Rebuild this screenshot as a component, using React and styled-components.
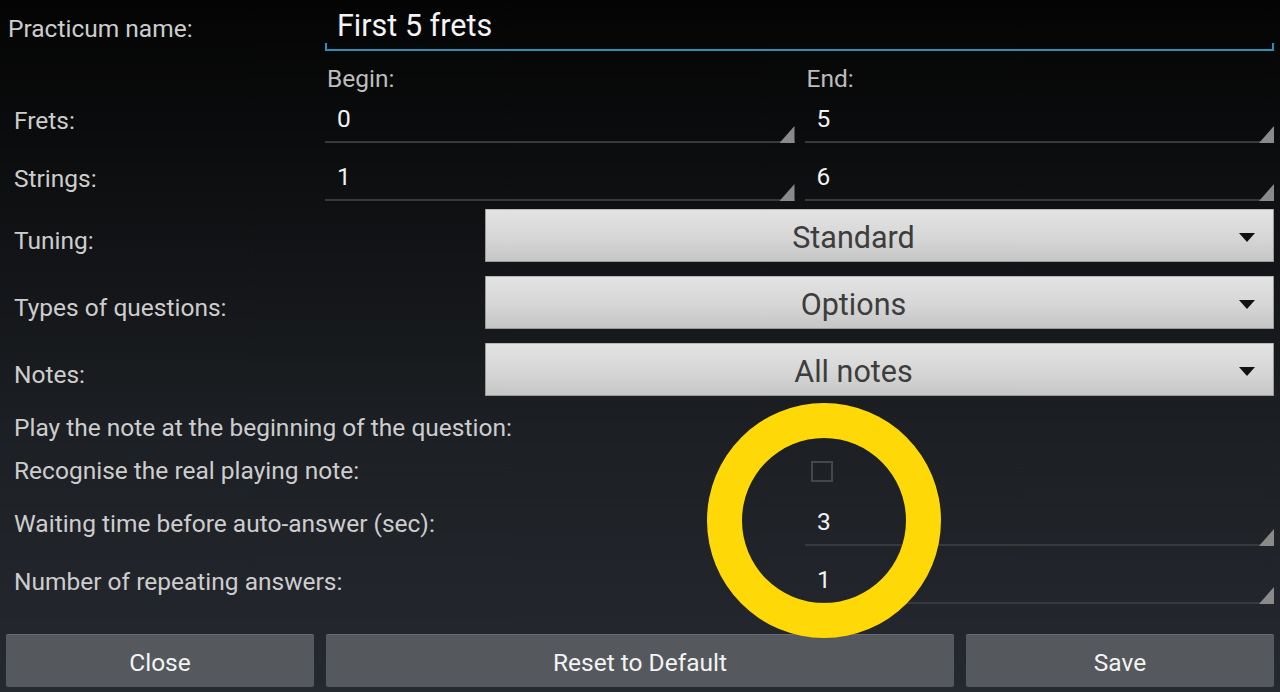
import styled, { createGlobalStyle } from 'styled-components'

const GlobalStyle = createGlobalStyle`
    html, body {
        margin: 0;
        padding: 0;
        background: #050505;
    }
    body {
        font-family: Roboto, "Noto Sans", "Liberation Sans", sans-serif;
    }
`

const Arrow = () => (
    <svg width="16" height="9" viewBox="0 0 16 9">
        <path d="M0 0 H16 L8 9 Z" fill="#111" />
    </svg>
)

const App = () => {
    return (
        <Screen>
            <GlobalStyle />
            <NameRow>
                <NameLabel>Practicum name:</NameLabel>
                <NameInput>First 5 frets</NameInput>
            </NameRow>

            <HeaderRow>
                <HeadCell>Begin:</HeadCell>
                <HeadCell>End:</HeadCell>
            </HeaderRow>

            <PairRow h={41}>
                <Label>Frets:</Label>
                <Field>0</Field>
                <Field>5</Field>
            </PairRow>
            <PairRow h={58}>
                <Label>Strings:</Label>
                <Field>1</Field>
                <Field>6</Field>
            </PairRow>

            <SpinnerRow top={8}>
                <SpinLabel>Tuning:</SpinLabel>
                <Spinner>
                    <span>Standard</span>
                    <ArrowBox><Arrow /></ArrowBox>
                </Spinner>
            </SpinnerRow>
            <SpinnerRow top={14}>
                <SpinLabel>Types of questions:</SpinLabel>
                <Spinner>
                    <span>Options</span>
                    <ArrowBox><Arrow /></ArrowBox>
                </Spinner>
            </SpinnerRow>
            <SpinnerRow top={14}>
                <SpinLabel>Notes:</SpinLabel>
                <Spinner>
                    <span>All notes</span>
                    <ArrowBox><Arrow /></ArrowBox>
                </Spinner>
            </SpinnerRow>

            <OptionRow h={32} top={16}>
                <Label>Play the note at the beginning of the question:</Label>
            </OptionRow>
            <OptionRow h={54}>
                <Label>Recognise the real playing note:</Label>
                <CheckCell>
                    <CheckBox />
                </CheckCell>
            </OptionRow>
            <ValueRow h={48}>
                <Label>Waiting time before auto-answer (sec):</Label>
                <WideField>3</WideField>
            </ValueRow>
            <ValueRow h={58}>
                <Label>Number of repeating answers:</Label>
                <WideField>1</WideField>
            </ValueRow>

            <ButtonBar>
                <Button>Close</Button>
                <Button>Reset to Default</Button>
                <Button>Save</Button>
            </ButtonBar>

            <Highlight />
        </Screen>
    )
}

const Screen = styled.div`
    position: relative;
    width: 1280px;
    height: 692px;
    overflow: hidden;
    display: flex;
    flex-direction: column;
    padding: 0 6px 0 14px;
    box-sizing: border-box;
    background: linear-gradient(to bottom, #040404 0%, #0b0c0d 20%, #131518 40%, #1c1f23 62%, #252930 100%);
    font-size: 24.5px;
    color: #d0d0d0;
`

const NameRow = styled.div`
    display: flex;
    height: 52px;
    margin-left: -6px;
`

const NameLabel = styled.div`
    width: 317px;
    padding-top: 15px;
    line-height: 28px;
    color: #cdcdcd;
`

const NameInput = styled.div`
    position: relative;
    flex: 1;
    height: 51px;
    box-sizing: border-box;
    padding: 9px 0 0 12px;
    font-size: 30.5px;
    line-height: 34px;
    color: #f4f4f4;
    border-bottom: 2px solid #2c8fb9;

    &::before,
    &::after {
        content: '';
        position: absolute;
        bottom: 0;
        width: 2px;
        height: 6px;
        background: #2c8fb9;
    }
    &::before { left: 0; }
    &::after { right: 0; }
`

const HeaderRow = styled.div`
    display: flex;
    gap: 10px;
    height: 50px;
    align-items: center;
    padding-left: 311px;
    padding-top: 2px;
    box-sizing: border-box;
`

const HeadCell = styled.div`
    flex: 1;
    padding-left: 2px;
    color: #bdbdbd;
`

const PairRow = styled.div`
    display: flex;
    gap: 10px;
    align-items: stretch;
    height: ${p => p.h}px;
`

const Label = styled.div`
    width: 301px;
    flex-shrink: 0;
    align-self: flex-end;
    padding-bottom: 8px;
    line-height: 28px;
    white-space: nowrap;
    color: #cdcdcd;
`

const Field = styled.div`
    position: relative;
    flex: 1;
    display: flex;
    align-items: flex-end;
    padding: 0 0 8px 12px;
    line-height: 28px;
    color: #f2f2f2;
    border-bottom: 2px solid #37393c;

    &::after {
        content: '';
        position: absolute;
        right: 0;
        bottom: -2px;
        width: 15px;
        height: 17px;
        background: #8a8a8a;
        clip-path: polygon(100% 0, 100% 100%, 0 100%);
    }
`

const SpinnerRow = styled.div`
    display: flex;
    height: 53px;
    margin-top: ${p => p.top}px;
`

const SpinLabel = styled.div`
    width: 471px;
    flex-shrink: 0;
    padding-top: 18px;
    line-height: 28px;
    color: #cdcdcd;
`

const Spinner = styled.div`
    position: relative;
    flex: 1;
    display: flex;
    align-items: center;
    justify-content: center;
    padding: 3px 52px 0 0;
    box-sizing: border-box;
    border: 1px solid #9a9a9a;
    border-top-color: #b8b8b8;
    border-radius: 1px;
    background: linear-gradient(to bottom, #e3e3e3 0%, #d6d6d6 55%, #c6c6c6 100%);
    font-size: 30.5px;
    color: #3d3d3d;
`

const ArrowBox = styled.div`
    position: absolute;
    right: 18px;
    top: 23px;
    display: flex;
`

const OptionRow = styled.div`
    display: flex;
    align-items: center;
    height: ${p => p.h}px;
    margin-top: ${p => p.top || 0}px;

    ${Label} {
        align-self: center;
        padding-bottom: 0;
        width: 791px;
    }
`

const CheckCell = styled.div`
    padding-left: 6px;
    display: flex;
    align-items: center;
`

const CheckBox = styled.div`
    width: 22px;
    height: 21px;
    box-sizing: border-box;
    border: 2px solid #44474b;
`

const ValueRow = styled.div`
    display: flex;
    height: ${p => p.h}px;

    ${Label} {
        width: 791px;
    }
`

const WideField = styled(Field)``

const ButtonBar = styled.div`
    display: grid;
    grid-template-columns: 308px 1fr 308px;
    gap: 12px;
    margin: 30px 0 0 -8px;
    height: 53px;
`

const Button = styled.div`
    display: flex;
    align-items: center;
    justify-content: center;
    padding-top: 2px;
    background: #55595d;
    border-top: 1px solid #676b6f;
    border-radius: 2px;
    box-sizing: border-box;
    color: #f3f3f3;
    font-size: 24.5px;
`

const Highlight = styled.div`
    position: absolute;
    left: 707px;
    top: 403px;
    width: 234px;
    height: 235px;
    box-sizing: border-box;
    border: 35px solid #ffd907;
    border-radius: 50%;
    pointer-events: none;
`

export default App
